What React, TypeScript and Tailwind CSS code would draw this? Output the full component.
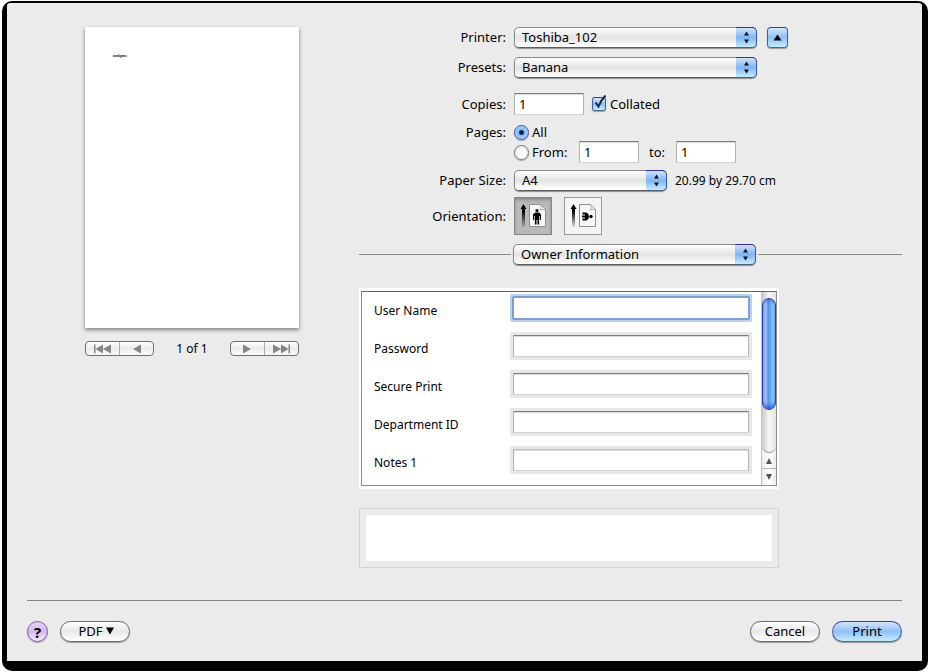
import { useState } from 'react'
import type { ReactNode } from 'react'

const BUTTON_FACE =
  'border border-[#6a6a6a] bg-linear-to-b from-white via-[#e9e9e9] to-white ' +
  'shadow-[0_1px_1px_rgba(0,0,0,0.35)]'

const BLUE_FACE =
  'border border-t-[#3f3aa0] border-x-[#4a5aa8] border-b-[#4f6a8c] ' +
  'bg-linear-to-b from-[#d3e5fb] via-[#8fc0f6] to-[#c4ecff] shadow-[0_1px_1px_rgba(0,0,0,0.35)]'

const TEXT_INPUT =
  'h-[22px] border border-t-[#7d7d7d] border-x-[#b4b4b4] border-b-[#d2d2d2] bg-white px-1 ' +
  'shadow-[inset_0_1px_1px_rgba(0,0,0,0.15)] outline-none'

const FIELDS = [
  { id: 'user-name', label: 'User Name', type: 'text' },
  { id: 'password', label: 'Password', type: 'password' },
  { id: 'secure-print', label: 'Secure Print', type: 'text' },
  { id: 'department-id', label: 'Department ID', type: 'text' },
  { id: 'notes-1', label: 'Notes 1', type: 'text' },
]

interface PopupProps {
  id?: string
  label?: string
  options: string[]
  className: string
}

function Popup({ id, label, options, className }: PopupProps) {
  return (
    <div className={`relative shrink-0 ${className}`}>
      <select
        id={id}
        aria-label={label}
        className="block h-[21px] w-full appearance-none rounded-[5px] border border-[#8a8a8a] border-b-[#5c5c5c] bg-linear-to-b from-white via-[#e4e4e4] to-white pr-6 pl-[7px] leading-[17px] shadow-[0_1px_1px_rgba(0,0,0,0.4)] outline-none"
      >
        {options.map((option) => (
          <option key={option}>{option}</option>
        ))}
      </select>
      <span className="pointer-events-none absolute inset-y-0 right-0 flex w-[21px] items-center justify-center rounded-r-[5px] border border-l-0 border-t-[#3a2f9c] border-r-[#3c5c98] border-b-[#49607c] bg-linear-to-b from-[#cfe2fa] via-[#7fb6f4] to-[#c4ecff]">
        <svg width="7" height="13" viewBox="0 0 7 13" aria-hidden="true">
          <path d="M3.5 0.5L6 4.5H1zM3.5 12.5L1 8.5h5z" fill="#0b1020" />
        </svg>
      </span>
    </div>
  )
}

function Row({ label, htmlFor, className, children }: { label: string; htmlFor?: string; className: string; children: ReactNode }) {
  return (
    <div className={`flex items-center gap-2 ${className}`}>
      <label htmlFor={htmlFor} className="w-[147px] shrink-0 text-right">
        {label}
      </label>
      {children}
    </div>
  )
}

function Radio({ label, checked, onChange }: { label: string; checked: boolean; onChange: () => void }) {
  return (
    <label className="flex items-center gap-[3px]">
      <input
        type="radio"
        name="pages"
        checked={checked}
        onChange={onChange}
        className="size-[15px] appearance-none rounded-full border border-[#777] bg-radial-[at_50%_70%] from-white from-40% to-[#d4d4d4] shadow-[0_1px_1px_rgba(0,0,0,0.3)] checked:border-[#42509a] checked:bg-radial-[at_50%_50%] checked:from-[#0c1c3c] checked:from-20% checked:via-[#7db8f4] checked:via-32% checked:to-[#c6e2fb]"
      />
      {label}
    </label>
  )
}

function OrientationIcon({ landscape }: { landscape: boolean }) {
  return (
    <svg width="36" height="36" viewBox="0 0 36 36" aria-hidden="true">
      <defs>
        <linearGradient id={landscape ? 'stem-l' : 'stem-p'} x1="0" y1="0" x2="0" y2="1">
          <stop offset="0.3" stopColor="#000" />
          <stop offset="1" stopColor="#000" stopOpacity="0.1" />
        </linearGradient>
      </defs>
      <path d="M8.5 6L11.5 11H10V29H7V11H5.5z" fill={landscape ? 'url(#stem-l)' : 'url(#stem-p)'} />
      <path d="M14.5 6.5H25.5L30.5 11.5V28.5H14.5Z" fill="#f7f7f7" stroke="#8f8f8f" />
      <path d="M25.5 6.5Q27 9 25.5 12Q28 10.5 30.5 11.5Z" fill="#fff" stroke="#999" strokeWidth="0.8" />
      {landscape ? (
        <g>
          <circle cx="26" cy="18.5" r="1.7" />
          <path
            d="M17.5 15.500H21.500Q23 16 23 18.500T21.500 21.500H17.500M17 18.500H22"
            fill="none"
            stroke="#000"
            strokeWidth="1.800"
          />
          <path d="M20 16h3v5h-3z" />
        </g>
      ) : (
        <g>
          <circle cx="22" cy="12.5" r="1.6" />
          <path d="M20 14.5h4l2 2v5.500h-1.200V18h-0.700v8.500h-1.600v-4.500h-1v4.500h-1.600V18h-0.700v4H18V16.500z" />
        </g>
      )}
    </svg>
  )
}

function PageButton({ label, path }: { label: string; path: string }) {
  return (
    <button type="button" aria-label={label} className="flex flex-1 items-center justify-center">
      <svg width="20" height="10" viewBox="0 0 20 10" aria-hidden="true">
        <path d={path} fill="#858585" />
      </svg>
    </button>
  )
}

const PAGER_CLASS =
  'flex h-[15px] w-[69px] divide-x divide-[#aaa] rounded-[4px] border border-[#707070] ' +
  'bg-linear-to-b from-white via-[#ececec] to-[#fafafa]'

function Preview() {
  return (
    <section className="ml-[58px] w-[214px] shrink-0">
      <div className="h-[301px] bg-white pt-[25px] pl-[28px] font-['Liberation_Sans',sans-serif] text-[3px] leading-[8px] font-bold shadow-[0_2px_4px_rgba(0,0,0,0.45)]">
        analigans
      </div>
      <div className="mt-[13px] flex items-center justify-between">
        <div className={PAGER_CLASS}>
          <PageButton label="First page" path="M1 0.5h1.5v9H1zM10 0.5v9L2.5 5zM18 0.5v9L10 5z" />
          <PageButton label="Previous page" path="M14 0.5v9L6 5z" />
        </div>
        <span className="text-[12px] leading-[14px]">1 of 1</span>
        <div className={PAGER_CLASS}>
          <PageButton label="Next page" path="M6 0.5v9L14 5z" />
          <PageButton label="Last page" path="M2 0.5v9L10 5zM10 0.5v9L17.5 5zM17.5 0.5H19v9h-1.5z" />
        </div>
      </div>
    </section>
  )
}

function ScrollBar() {
  return (
    <div aria-hidden="true" className="flex w-[15px] flex-col border-l border-[#c4c4c4] bg-linear-to-r from-[#ececec] via-white to-[#ececec]">
      <div className="flex-1 rounded-b-full border-b border-[#999] bg-linear-to-r from-[#c8c8c8] via-[#f8f8f8] to-[#e4e4e4] pt-[6px]">
        <div className="h-[112px] rounded-full border border-[#2c3cb4] bg-linear-to-r from-[#a9c4f2] from-20% via-[#4a97ee] via-45% to-[#a4dcff] shadow-[inset_0_2px_2px_rgba(44,60,180,0.4),inset_0_-3px_3px_rgba(20,60,200,0.6)]" />
      </div>
      <div className="flex h-4 items-center justify-center border-b border-[#b4b4b4]">
        <svg width="8" height="8" viewBox="0 0 8 8"><path d="M4 1l3 6H1z" fill="#555" /></svg>
      </div>
      <div className="flex h-4 items-center justify-center">
        <svg width="8" height="8" viewBox="0 0 8 8"><path d="M4 7L1 1h6z" fill="#555" /></svg>
      </div>
    </div>
  )
}

function OwnerFields() {
  return (
    <div className="mt-[23px] w-[420px] bg-white px-[2px] py-[3px]">
      <div className="flex h-[195px] border border-[#8c8c8c] border-t-[#666]">
        <div className="flex-1 space-y-[10px] overflow-hidden pt-[2px] pl-[12px] text-[12px]">
          {FIELDS.map((field, i) => (
            <div key={field.id} className="flex h-[28px] items-center">
              <label htmlFor={field.id} className="w-[136px] pt-[4px]">
                {field.label}
              </label>
              <div className={i === 0 ? 'rounded-[2px] bg-[#bdd2ec] p-[2px]' : 'bg-[#e7e7e7] p-[3px]'}>
                <input
                  id={field.id}
                  type={field.type}
                  className={
                    i === 0
                      ? 'block h-[24px] w-[238px] rounded-[2px] border-2 border-[#7ba1d3] bg-white px-1 outline-none'
                      : `block w-[236px] ${TEXT_INPUT} ${i === FIELDS.length - 1 ? 'border-t-[#c0c0c0]' : ''}`
                  }
                />
              </div>
            </div>
          ))}
        </div>
        <ScrollBar />
      </div>
    </div>
  )
}

export default function App() {
  const [collated, setCollated] = useState(true)
  const [range, setRange] = useState<'all' | 'from'>('all')
  const [landscape, setLandscape] = useState(false)

  return (
    <div className="flex min-h-screen flex-col bg-white pt-px pr-px pb-px pl-[2px] font-['Noto_Sans','Open_Sans',sans-serif] text-[13px] leading-[17px] text-black">
      <form
        onSubmit={(e) => e.preventDefault()}
        className="flex flex-1 flex-col rounded-[10px] bg-black pt-[2px] pr-[6px] pb-[10px] pl-[5px]"
      >
        <div className="flex flex-1 flex-col rounded-t-[3px] bg-[#ebebeb] px-[20px] pt-[24px] pb-[19px]">
          <div className="flex flex-1 gap-[60px]">
            <Preview />

            <section className="flex-1">
              <Row label="Printer:" htmlFor="printer" className="h-[21px]">
                <Popup id="printer" options={['Toshiba_102']} className="w-[243px]" />
                <button
                  type="button"
                  aria-label="Hide details"
                  className={`ml-[2px] flex size-[21px] items-center justify-center rounded-[4px] ${BLUE_FACE}`}
                >
                  <svg width="9" height="7" viewBox="0 0 9 7" aria-hidden="true"><path d="M4.5 0.5L8.5 6.5h-8z" /></svg>
                </button>
              </Row>
              <Row label="Presets:" htmlFor="presets" className="mt-[9px] h-[21px]">
                <Popup id="presets" options={['Banana']} className="w-[243px]" />
              </Row>
              <Row label="Copies:" htmlFor="copies" className="mt-[15px] h-[22px]">
                <input id="copies" defaultValue="1" className={`w-[70px] ${TEXT_INPUT}`} />
                <label className="flex items-center gap-1">
                  <span className="relative flex">
                    <input
                      type="checkbox"
                      checked={collated}
                      onChange={(e) => setCollated(e.target.checked)}
                      className={`size-[14px] appearance-none rounded-[3px] ${BLUE_FACE}`}
                    />
                    {collated && (
                      <svg width="16" height="17" viewBox="0 0 16 17" className="pointer-events-none absolute bottom-0 left-0" aria-hidden="true">
                        <path d="M3.5 8.5L6.5 12.5Q9 6 13.5 1.5" fill="none" stroke="#20243c" strokeWidth="2" />
                      </svg>
                    )}
                  </span>
                  Collated
                </label>
              </Row>
              <Row label="Pages:" className="mt-[8px] h-[18px]">
                <Radio label="All" checked={range === 'all'} onChange={() => setRange('all')} />
              </Row>
              <div className="flex h-[22px] items-center pl-[155px]">
                <Radio label="From:" checked={range === 'from'} onChange={() => setRange('from')} />
                <input aria-label="From page" defaultValue="1" className={`ml-auto w-[60px] ${TEXT_INPUT}`} />
                <label htmlFor="to-page" className="w-[37px] pl-[10px]">to:</label>
                <input id="to-page" defaultValue="1" className={`mr-[166px] w-[60px] ${TEXT_INPUT}`} />
              </div>
              <Row label="Paper Size:" htmlFor="paper" className="mt-[7px] h-[21px]">
                <Popup id="paper" options={['A4']} className="w-[153px]" />
                <span className="text-[12px]">20.99 by 29.70 cm</span>
              </Row>
              <Row label="Orientation:" className="mt-[6px] h-[38px]">
                <button
                  type="button"
                  aria-label="Portrait"
                  aria-pressed={!landscape}
                  onClick={() => setLandscape(false)}
                  className="size-[38px] border border-[#999] bg-[#f4f4f4] aria-pressed:border-[#858585] aria-pressed:bg-[#b9b9b9] aria-pressed:shadow-[inset_0_2px_3px_rgba(0,0,0,0.25)]"
                >
                  <OrientationIcon landscape={false} />
                </button>
                <button
                  type="button"
                  aria-label="Landscape"
                  aria-pressed={landscape}
                  onClick={() => setLandscape(true)}
                  className="ml-1 size-[38px] border border-[#999] bg-[#f4f4f4] aria-pressed:border-[#858585] aria-pressed:bg-[#b9b9b9] aria-pressed:shadow-[inset_0_2px_3px_rgba(0,0,0,0.25)]"
                >
                  <OrientationIcon landscape />
                </button>
              </Row>

              <div className="mt-[9px] flex items-center gap-[2px]">
                <div className="h-px w-[152px] bg-[#8a8a8a]" />
                <Popup label="Options" options={['Owner Information']} className="w-[243px]" />
                <div className="h-px flex-1 bg-[#8a8a8a]" />
              </div>

              <OwnerFields />

              <div className="mt-[19px] w-[420px] border border-[#d3d3d3] p-[6px]">
                <div className="h-[46px] bg-white" />
              </div>
            </section>
          </div>

          <footer className="flex items-center border-t border-[#858585] pt-[20px]">
            <button
              type="button"
              aria-label="Help"
              className="size-[21px] rounded-full border border-[#7a5a9e] bg-linear-to-b from-[#e6d4f8] via-[#d3b8f4] to-[#f6ecff] text-[15px] leading-[18px] font-bold shadow-[0_1px_1px_rgba(0,0,0,0.3)]"
            >
              ?
            </button>
            <button type="button" className={`ml-3 flex h-[21px] w-[70px] items-center justify-center gap-[3px] rounded-full pb-px pl-[2px] ${BUTTON_FACE}`}>
              PDF
              <svg width="8" height="8" viewBox="0 0 8 8" aria-hidden="true"><path d="M0 0.5h8L4 7.5z" /></svg>
            </button>
            <button type="button" className={`ml-auto flex h-[21px] w-[70px] items-center justify-center rounded-full pb-px ${BUTTON_FACE}`}>
              Cancel
            </button>
            <button type="submit" className={`ml-3 flex h-[21px] w-[70px] items-center justify-center rounded-full pb-px ${BLUE_FACE}`}>
              Print
            </button>
          </footer>
        </div>
      </form>
    </div>
  )
}
